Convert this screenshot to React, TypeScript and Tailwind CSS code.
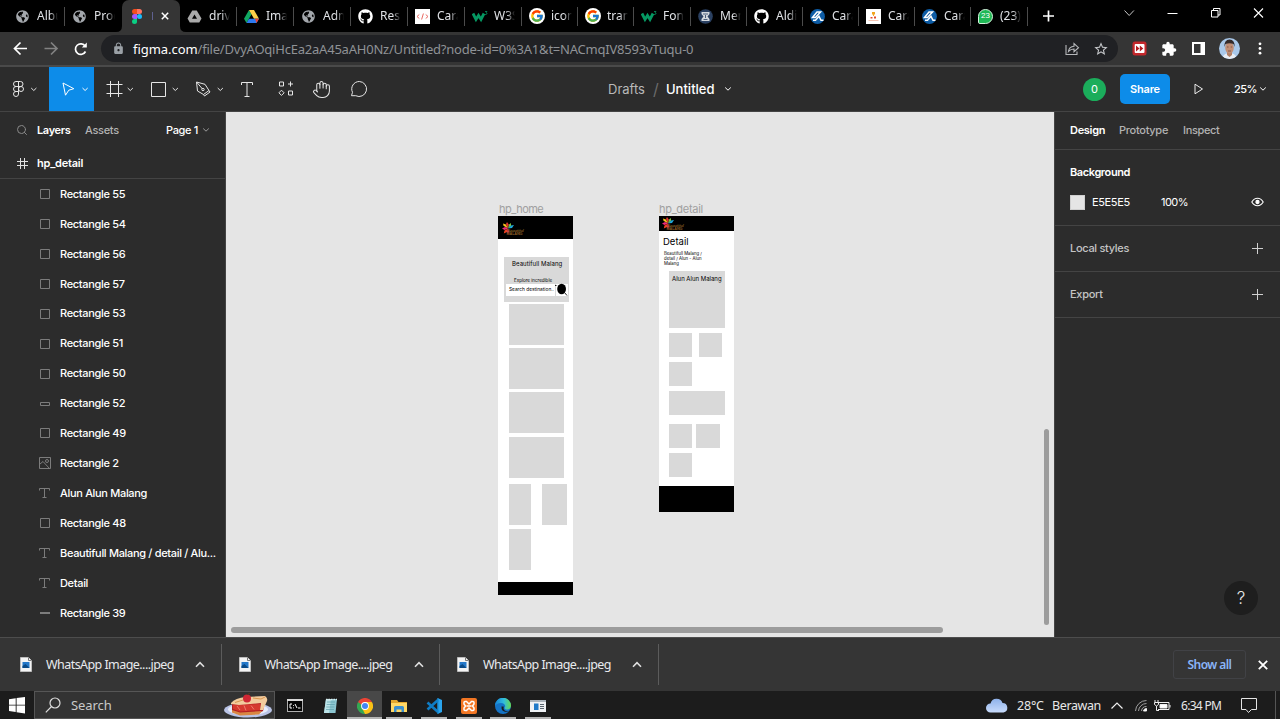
import React from "react";
import { Hand, Search as SearchIcon } from "lucide-react";
import { FaGithub, FaGlobeAmericas } from "react-icons/fa";
import { FcGoogle } from "react-icons/fc";
import { MdExtension, MdLock, MdStarBorder } from "react-icons/md";

type Kind = { children?: React.ReactNode; className?: string };

/* ---------- favicons ---------- */

const Globe = () => <FaGlobeAmericas className="h-[13px] w-[13px] text-[#a3a7ac]" />;

const FigmaLogo = () => (
  <svg className="h-[15px] w-[10px]" viewBox="0 0 20 30">
    <path d="M5 0h5v10H5A5 5 0 0 1 5 0z" fill="#f24e1e" />
    <path d="M10 0h5a5 5 0 0 1 0 10h-5z" fill="#ff7262" />
    <path d="M5 10h5v10H5a5 5 0 0 1 0-10z" fill="#a259ff" />
    <circle cx="15" cy="15" r="5" fill="#1abcfe" />
    <path d="M5 20h5v5a5 5 0 1 1-5-5z" fill="#0acf83" />
  </svg>
);

const DriveGray = () => (
  <svg className="h-[13px] w-[15px]" viewBox="0 0 30 26">
    <path d="M10.500 1h9L29 17l-4.500 8h-19L1 17z" fill="#a9a9a9" />
    <path d="M15 9l5 8.500H10z" fill="#000" />
  </svg>
);

const DriveColor = () => (
  <svg className="h-[13px] w-[15px]" viewBox="0 0 30 26">
    <path d="M10 0L0 17.500 5 26l10-17.500z" fill="#11a861" />
    <path d="M10 0h10l10 17.500H20z" fill="#ffcf48" />
    <path d="M10 17.500h20L25 26H5z" fill="#2d79f0" />
    <path d="M22 17.500h8L25 26z" fill="#ea4335" />
  </svg>
);

const Github = () => <FaGithub className="h-[15px] w-[15px] text-white" />;

const CodeIcon = () => (
  <svg className="h-[15px] w-[15px]" viewBox="0 0 15 15">
    <rect width="15" height="15" fill="#fff" />
    <path d="M4.300 5.500L2 7.500l2.300 2M10.700 5.500l2.300 2-2.300 2M8.400 4.500l-1.800 6" fill="none" stroke="#ea6a62" strokeWidth="1" />
  </svg>
);

const W3 = () => (
  <svg className="h-[15px] w-[16px]" viewBox="0 0 16 15">
    <path d="M1 4.500l3 6 2.500-4L9 10.500l3-6" fill="none" stroke="#059862" strokeWidth="2.800" />
    <path d="M13 2.500h2l-1 1.300c1.500 0 1.300 2-.9 1.700" fill="none" stroke="#059862" strokeWidth=".8" />
  </svg>
);

const Google = () => (
  <span className="flex h-[16px] w-[16px] items-center justify-center rounded-full bg-white">
    <FcGoogle className="h-[14px] w-[14px]" />
  </span>
);

const Mendeley = () => (
  <svg className="h-[15px] w-[15px]" viewBox="0 0 15 15">
    <circle cx="7.500" cy="7.500" r="7.300" fill="#2b4162" />
    <path d="M3.500 3h8v2L9.500 7.500l2 2.500v2h-8v-2l2-2.500-2-2.500z" fill="#d4d9df" />
    <path d="M5 5h5M5.500 10.500h4M7.500 6v3" stroke="#2b4162" strokeWidth=".8" />
  </svg>
);

const BlueIcon = () => (
  <svg className="h-[15px] w-[15px]" viewBox="0 0 15 15">
    <circle cx="7.500" cy="7.500" r="7.400" fill="#0d5ca5" />
    <path d="M2.500 8.500L7 3h3.500L5.500 8.500h-3zM3 11.300h2.500l3.500-4 2 4h2.500" fill="none" stroke="#fff" strokeWidth="1.500" />
  </svg>
);

const CardIcon = () => (
  <svg className="h-[15px] w-[15px]" viewBox="0 0 15 15">
    <rect width="15" height="15" fill="#fff" />
    <path d="M6 3h3v2.500H8V7h-.9V5.500H6z" fill="#f2a51d" />
    <path d="M4.500 8h2v1.500h-2zM8 7.500h2v2H8z" fill="#e04b2a" />
    <path d="M2.500 11.500h10" stroke="#f3b39d" strokeWidth=".8" />
  </svg>
);

const WhatsApp = () => (
  <span className="flex h-[15px] w-[15px] shrink-0 items-center justify-center rounded-[8px_8px_8px_2px] border border-[#d7f5df] bg-[#1fb855] font-['Liberation_Sans',sans-serif] text-[8px] leading-none text-white">
    23
  </span>
);

const Fade = ({ children }: Kind) => (
  <span className="w-[21px] overflow-hidden whitespace-nowrap text-[12px] leading-4 text-[#dfe1e5] [mask-image:linear-gradient(to_right,black_60%,transparent)]">
    {children}
  </span>
);

const tabs: { w: string; icon: React.ReactNode; t: string; sep?: boolean }[] = [
  { w: "w-[57px]", icon: <Globe />, t: "Album", sep: true },
  { w: "w-[57px]", icon: <Globe />, t: "Produk" },
  { w: "w-[58px]", icon: <FigmaLogo />, t: "active" },
  { w: "w-[57px]", icon: <DriveGray />, t: "drive", sep: true },
  { w: "w-[57px]", icon: <DriveColor />, t: "Image", sep: true },
  { w: "w-[57px]", icon: <Globe />, t: "Admin", sep: true },
  { w: "w-[57px]", icon: <Github />, t: "Resp", sep: true },
  { w: "w-[57px]", icon: <CodeIcon />, t: "Cara", sep: true },
  { w: "w-[57px]", icon: <W3 />, t: "W3S", sep: true },
  { w: "w-[56px]", icon: <Google />, t: "icon", sep: true },
  { w: "w-[56px]", icon: <Google />, t: "trans", sep: true },
  { w: "w-[57px]", icon: <W3 />, t: "Font", sep: true },
  { w: "w-[56px]", icon: <Mendeley />, t: "Men", sep: true },
  { w: "w-[56px]", icon: <Github />, t: "Aldi", sep: true },
  { w: "w-[56px]", icon: <BlueIcon />, t: "Cara", sep: true },
  { w: "w-[56px]", icon: <CardIcon />, t: "Cara", sep: true },
  { w: "w-[56px]", icon: <BlueIcon />, t: "Cara", sep: true },
  { w: "w-[57px]", icon: <WhatsApp />, t: "(23)", sep: true },
];

const TabStrip = () => (
  <div className="flex h-8 shrink-0 bg-black pl-[8px]">
    {tabs.map((t, i) =>
      t.t === "active" ? (
        <div key={i} className="relative flex h-8 w-[58px] shrink-0 items-center rounded-t-[7px] bg-[#353535] pl-[10px]">
          <svg className="absolute -left-[6px] bottom-0 h-[6px] w-[70px]" viewBox="0 0 70 6">
            <path d="M0 6q6 0 6-6v6zM70 6q-6 0-6-6v6z" fill="#353535" />
          </svg>
          <FigmaLogo />
          <span className="ml-[10px] h-[8px] w-px bg-[#5f6190]" />
          <svg className="ml-[8px] h-[8px] w-[8px]" viewBox="0 0 8 8">
            <path d="M.8.800l6.400 6.400M7.200.800L.8 7.200" stroke="#fff" strokeWidth="1.500" />
          </svg>
        </div>
      ) : (
        <div key={i} className={`flex h-8 shrink-0 items-center ${t.w}`}>
          <span className="ml-[6.500px] flex w-[16px] justify-center">{t.icon}</span>
          <span className="ml-[6.500px] flex">
            <Fade>{t.t}</Fade>
          </span>
          {t.sep && <span className="ml-auto h-[19px] w-px bg-[#4b4b4b]" />}
        </div>
      ),
    )}
    <svg className="h-8 w-[252px] shrink-0" viewBox="1028 0 252 32" fill="none" stroke="#fff">
      <path d="M1043 16h11M1048.500 10.500v11" strokeWidth="1.700" />
      <path d="M1124.500 10.500l4.700 5 4.700-5" stroke="#c8c8c8" />
      <path d="M1167.500 13.500h10" />
      <path d="M1211.500 10.500h6.500v6.500h-6.500zM1213.500 10.500v-2h6.500v6.500h-2" />
      <path d="M1254 8.500l9 9M1263 8.500l-9 9" strokeWidth="1.100" />
    </svg>
  </div>
);

const AddressBar = () => (
  <div className="flex h-[33px] shrink-0 items-center bg-[#353535]">
    <svg className="h-[33px] w-[101px] shrink-0" viewBox="0 32 101 33" fill="none" stroke="#fff" strokeWidth="1.700">
      <path d="M27 48.500H15M20.500 42.500l-6 6 6 6" />
      <path d="M44.500 48.500h12M51 42.500l6 6-6 6" stroke="#828282" />
      <path d="M85.500 51.500a5.300 5.300 0 1 1-.3-5.300" />
      <path d="M86.800 42.500v5h-5z" fill="#fff" stroke="none" />
    </svg>
    <div className="flex h-[27px] w-[1017px] items-center rounded-full bg-[#202124] pl-[11px] pr-[9px]">
      <MdLock className="h-[13px] w-[13px] text-[#9aa0a6]" />
      <span className="ml-[8px] whitespace-nowrap text-[13px] leading-5 tracking-[-0.215px] text-[#8f9296]">
        <span className="tracking-[-0.050px] text-white">figma.com</span>/file/DvyAOqiHcEa2aA45aAH0Nz/Untitled?node-id=0%3A1&amp;t=NACmqIV8593vTuqu-0
      </span>
      <svg className="ml-auto h-[16px] w-[16px]" viewBox="0 0 16 16" fill="none" stroke="#b6b8bb" strokeWidth="1.100">
        <path d="M2 4v9.500h11V10.500M4.500 10.500c.5-3.500 2.500-5 5.500-5.200V2.500l4.500 4.200-4.500 4V8c-2.500 0-4 .7-5.500 2.500z" />
      </svg>
      <MdStarBorder className="ml-[13px] h-[16px] w-[16px] text-[#c5c7ca]" />
    </div>
    <svg className="ml-[14px] h-[15px] w-[15px]" viewBox="0 0 15 15">
      <rect x=".5" y=".5" width="14" height="14" rx="2.500" fill="#c3272b" />
      <rect x="2.700" y="3" width="9.800" height="9" rx="1" fill="#fff" />
      <path d="M4 4.500l3.500 3L4 10.500zM7.800 4.500l3.500 3-3.500 3z" fill="#b31b20" />
    </svg>
    <MdExtension className="ml-[14px] h-[16px] w-[16px] text-white" />
    <svg className="ml-[15px] h-[13px] w-[13px]" viewBox="0 0 13 13">
      <path d="M0 0h13v13H0zM2 2v9h6.500V2z" fill="#fff" fillRule="evenodd" />
    </svg>
    <svg className="ml-[14px] h-[21px] w-[21px]" viewBox="0 0 21 21">
      <clipPath id="avatar"><circle cx="10.500" cy="10.500" r="10.500" /></clipPath>
      <g clipPath="url(#avatar)">
        <rect width="21" height="21" fill="#a9c8ea" />
        <path d="M3 21q1-5 5-5.500h5q4 .5 5 5.500z" fill="#e8edf5" />
        <path d="M8 13h5v4l-2.500 2L8 17z" fill="#b07f67" />
        <ellipse cx="10.500" cy="9.800" rx="4.300" ry="5.800" fill="#c08e76" />
        <path d="M5.500 9q-.5-7.500 5-7.500t5 7.500l-1-3q-4-1.500-8 0z" fill="#332a2a" />
        <path d="M8 9h1.500M11.700 9h1.500M9 13h3" stroke="#6b4338" strokeWidth=".7" />
      </g>
    </svg>
    <svg className="ml-[18px] h-[13px] w-[4px]" viewBox="0 0 4 13" fill="#fff">
      <circle cx="2" cy="1.800" r="1.400" /><circle cx="2" cy="6.500" r="1.400" /><circle cx="2" cy="11.200" r="1.400" />
    </svg>
  </div>
);

/* ---------- editor toolbar ---------- */

const Toolbar = () => (
  <div className="flex h-[47px] shrink-0 items-center border-b border-t-2 border-b-[#444] border-t-[#4a4a4a] bg-[#2c2c2c] font-['Inter',sans-serif]">
    <svg className="h-full w-[49px] shrink-0" viewBox="0 67 49 44" fill="none" stroke="#e6e6e6">
      <path d="M18.500 81.500h-2.500a2.500 2.500 0 0 0 0 5h2.500zM18.500 81.500h2a2.500 2.500 0 0 1 0 5h-2zM18.500 86.500h-2.500a2.500 2.500 0 0 0 0 5h2.500zM18.500 91.500h-2.500a2.500 2.500 0 1 0 2.500 2.500z" />
      <circle cx="21" cy="89" r="2.500" />
      <path d="M31.200 88l2.600 2.500 2.600-2.500" />
    </svg>
    <svg className="h-full w-[45px] shrink-0 bg-[#0d8ce9]" viewBox="49 67 45 44" fill="none" stroke="#fff">
      <path d="M63 83l10.800 5.700-5 1.500-3.300 5z" strokeLinejoin="round" />
      <path d="M82.500 88l2.600 2.500 2.600-2.500" />
    </svg>
    <svg className="h-full w-[45px] shrink-0" viewBox="94 67 45 44" fill="none" stroke="#e6e6e6">
      <path d="M110.500 81v16M118.500 81v16M106.500 84.500h16M106.500 93.500h16" />
      <path d="M127.700 88l2.600 2.500 2.600-2.500" />
    </svg>
    <svg className="h-full w-[45px] shrink-0" viewBox="139 67 45 44" fill="none" stroke="#e6e6e6">
      <path d="M151.500 82.500h14v14h-14z" />
      <path d="M172.700 88l2.600 2.500 2.600-2.500" />
    </svg>
    <svg className="h-full w-[45px] shrink-0" viewBox="184 67 45 44" fill="none" stroke="#e6e6e6" strokeLinejoin="round">
      <path d="M196.500 82l8.500 2.300 4 6.200-5.500 4-6-3.500zM196.500 82l6 7M203.500 94.500l1 1.500 5.500-4-1-1.500" />
      <circle cx="203" cy="89.500" r="1.200" />
      <path d="M217.700 88l2.600 2.500 2.600-2.500" />
    </svg>
    <svg className="h-full w-[37px] shrink-0" viewBox="229 67 37 44" fill="none" stroke="#e6e6e6">
      <path d="M241.500 85v-2.500h11V85M247 82.500V96M244.500 96.500h5" />
    </svg>
    <svg className="h-full w-[39px] shrink-0" viewBox="266 67 39 44" fill="none" stroke="#e6e6e6">
      <path d="M279.500 82h4v4h-4zM288.500 91h4v4h-4zM290.500 81.500v5M288 84h5M281.500 90.200l2.600 2.600-2.600 2.600-2.600-2.600z" />
    </svg>
    <Hand className="ml-[7px] h-[19px] w-[19px] shrink-0 text-[#e6e6e6]" strokeWidth={1.300} />
    <svg className="h-full w-[45px] shrink-0" viewBox="331 67 45 44" fill="none" stroke="#e6e6e6">
      <path d="M359.300 81.500a7.500 7.500 0 1 1-3.600 14.200H351.500l1-3.400a7.500 7.500 0 0 1 6.800-10.800z" strokeLinejoin="round" />
    </svg>
    <div className="ml-[232px] flex items-center text-[13px] leading-5">
      <span className="w-[38px] whitespace-nowrap text-[#b9b9b9]">Drafts</span>
      <span className="w-[20px] pl-[7px] text-[16px] text-[#6b6b6b]">/</span>
      <span className="w-[58px] font-medium text-white">Untitled</span>
      <svg className="h-[6px] w-[8px]" viewBox="0 0 8 6" fill="none" stroke="#fff"><path d="M1.200 1.500L4 4.200l2.800-2.700" /></svg>
    </div>
    <div className="ml-auto flex w-[197px] items-center">
      <span className="flex h-[23px] w-[23px] items-center justify-center rounded-full bg-[#1bad5b] text-[11px] text-white">0</span>
      <span className="ml-[14px] flex h-[30px] w-[50px] items-center justify-center rounded-[5px] bg-[#0d8ce9] text-[11px] font-semibold tracking-[-0.200px] text-white">Share</span>
      <svg className="ml-[24px] h-[12px] w-[10px]" viewBox="0 0 10 12" fill="none" stroke="#eee"><path d="M1 1.200L8.500 6 1 10.800z" /></svg>
      <span className="ml-[30px] w-[25px] text-[11px] font-medium tracking-[-0.500px] text-white">25%</span>
      <svg className="h-[6px] w-[8px]" viewBox="0 0 8 6" fill="none" stroke="#fff"><path d="M1.200 1.500L4 4.200l2.800-2.700" /></svg>
    </div>
  </div>
);

/* ---------- layers ---------- */

const RowIcon = ({ k }: { k: string }) => (
  <svg className="h-[12px] w-[12px] shrink-0" viewBox="0 0 12 12" fill="none" stroke="#7c7c7c">
    {k === "r" && <path d="M1.500 1.500h9v9h-9z" />}
    {k === "w" && <path d="M1.500 4.500h9v3h-9z" />}
    {k === "l" && <path d="M1 5.500h10M1 6.500h10" />}
    {k === "t" && <path d="M.5 3.500v-2h10v2M5.500 1.500v9M3.500 10.500h4" />}
    {k === "i" && (
      <>
        <path d="M.5.500h11v11H.5zM1 7l3-2.500 6.500 7" />
        <circle cx="8" cy="4" r="1.500" />
      </>
    )}
  </svg>
);

const layers: [string, string][] = [
  ["r", "Rectangle 55"], ["r", "Rectangle 54"], ["r", "Rectangle 56"], ["r", "Rectangle 57"],
  ["r", "Rectangle 53"], ["r", "Rectangle 51"], ["r", "Rectangle 50"], ["w", "Rectangle 52"],
  ["r", "Rectangle 49"], ["i", "Rectangle 2"], ["t", "Alun Alun Malang"], ["r", "Rectangle 48"],
  ["t", "Beautifull Malang / detail / Alu..."], ["t", "Detail"], ["l", "Rectangle 39"],
];

const LayersPanel = () => (
  <aside className="flex w-[226px] shrink-0 flex-col border-r border-[#444] bg-[#2c2c2c] text-[11px] text-white">
    <div className="flex h-[36px] items-center pl-[16px]">
      <SearchIcon className="h-[12px] w-[12px] text-[#8a8a8a]" strokeWidth={2} />
      <span className="ml-[9px] w-[48px] font-semibold tracking-[-0.350px]">Layers</span>
      <span className="w-[81px] font-medium tracking-[-0.300px] text-[#b3b3b3]">Assets</span>
      <span className="w-[36px] whitespace-nowrap font-medium tracking-[-0.350px]">Page 1</span>
      <svg className="h-[6px] w-[8px]" viewBox="0 0 8 6" fill="none" stroke="#9a9a9a"><path d="M1.200 1.500L4 4.200l2.800-2.700" /></svg>
    </div>
    <div className="flex h-[31px] items-center border-b border-[#444] pl-[17px]">
      <svg className="h-[11px] w-[11px]" viewBox="0 0 11 11" fill="none" stroke="#e0e0e0"><path d="M3.500 0v11M7.500 0v11M0 3.500h11M0 7.500h11" /></svg>
      <span className="ml-[9px] font-semibold tracking-[-0.220px]">hp_detail</span>
    </div>
    {layers.map(([k, t]) => (
      <div key={t} className="flex h-[29.950px] shrink-0 items-center gap-[9px] pl-[39px]">
        <RowIcon k={k} />
        <span className="whitespace-nowrap font-medium tracking-[-0.320px]">{t}</span>
      </div>
    ))}
  </aside>
);

/* ---------- canvas ---------- */

const Box = ({ className = "" }: Kind) => <div className={`absolute bg-[#d9d9d9] ${className}`} />;

const FlowerLogo = () => (
  <svg className="h-[13px] w-[24px]" viewBox="0 0 24 13">
    <path d="M6 6.500L1.500 3.800 1 1.500l3 1z" fill="#f6c21c" />
    <path d="M6 6.500L4 2l1-2 1.700 2.500z" fill="#e6342e" />
    <path d="M6 6.500L7 2.500 9 1v2.500z" fill="#7bc143" />
    <path d="M6 6.500L9 3.500l3-.5-2 3z" fill="#1fa9d8" />
    <path d="M6 6.500L2.500 8 0 6.500 3 5z" fill="#ee2a7b" />
    <path d="M6 6.500L5 10l-3.200 1.500.7-3z" fill="#ef4123" />
    <path d="M6 6.500l1.200 3L6 12l-1.200-2z" fill="#d91f5c" />
    <text x="5" y="9.500" fontSize="5" fontStyle="italic" textLength="17" fill="#a57b2d" fontFamily="Liberation Serif">Beautiful</text>
    <text x="4.500" y="12.800" fontSize="3.800" fontWeight="bold" textLength="16" fill="#8a5c24" fontFamily="Liberation Sans">MALANG</text>
  </svg>
);

const Canvas = () => (
  <main className="relative min-w-0 flex-1 overflow-hidden bg-[#e5e5e5] text-black">
    <span className="absolute left-[273px] top-[90px] text-[11px] leading-[14px] tracking-[-0.500px] text-[#a0a0a0]">hp_home</span>
    <div className="absolute left-[272px] top-[104px] h-[379px] w-[75px] bg-white">
      <div className="h-[23px] bg-black pl-[4px] pt-[6px]"><FlowerLogo /></div>
      <Box className="left-[6px] top-[41px] h-[45px] w-[65px]" />
      <span className="absolute left-[14px] top-[44px] whitespace-nowrap text-[6px] leading-[8px] tracking-[0.080px]">Beautifull Malang</span>
      <span className="absolute left-[16px] top-[62px] whitespace-nowrap text-[4.500px] leading-[6px]">Explore incredible</span>
      <div className="absolute left-[8px] top-[68px] h-[12px] w-[49px] whitespace-nowrap bg-white pl-[3px] text-[4.800px] leading-[11px]">Search destination..</div>
      <div className="absolute left-[58px] top-[68px] h-[12px] w-[12px] bg-white" />
      <svg className="absolute left-[57px] top-[66px] h-[16px] w-[14px]" viewBox="0 0 14 16">
        <path d="M0 3.500h1.500M9.500 10.500l2.500 3" fill="none" stroke="#222" strokeWidth="1" />
        <ellipse cx="6.600" cy="7" rx="4.400" ry="5.200" />
      </svg>
      <Box className="left-[11px] top-[88px] h-[41px] w-[55px]" />
      <Box className="left-[11px] top-[132px] h-[41px] w-[55px]" />
      <Box className="left-[11px] top-[176px] h-[41px] w-[55px]" />
      <Box className="left-[11px] top-[221px] h-[41px] w-[55px]" />
      <Box className="left-[11px] top-[268px] h-[41px] w-[22px]" />
      <Box className="left-[44px] top-[268px] h-[41px] w-[25px]" />
      <Box className="left-[11px] top-[313px] h-[41px] w-[22px]" />
      <div className="absolute bottom-0 h-[13px] w-[75px] bg-black" />
    </div>
    <span className="absolute left-[433px] top-[90px] text-[11px] leading-[14px] tracking-[-0.300px] text-[#a0a0a0]">hp_detail</span>
    <div className="absolute left-[433px] top-[104px] h-[296px] w-[75px] bg-white">
      <div className="h-[15px] bg-black pl-[3px] pt-[1px]"><FlowerLogo /></div>
      <span className="absolute left-[4px] top-[20px] text-[9.500px] leading-[12px]">Detail</span>
      <p className="absolute left-[5px] top-[35px] whitespace-nowrap text-[4.300px] leading-[5.200px]">
        Beautifull Malang /<br />detail / Alun - Alun<br />Malang
      </p>
      <Box className="left-[10px] top-[55px] h-[57px] w-[56px]" />
      <span className="absolute left-[13px] top-[59px] whitespace-nowrap text-[6px] leading-[8px]">Alun Alun Malang</span>
      <Box className="left-[10px] top-[117px] h-[24px] w-[23px]" />
      <Box className="left-[40px] top-[117px] h-[24px] w-[23px]" />
      <Box className="left-[10px] top-[146px] h-[24px] w-[23px]" />
      <Box className="left-[10px] top-[175px] h-[24px] w-[56px]" />
      <Box className="left-[10px] top-[208px] h-[24px] w-[23px]" />
      <Box className="left-[37px] top-[208px] h-[24px] w-[24px]" />
      <Box className="left-[10px] top-[237px] h-[24px] w-[23px]" />
      <div className="absolute bottom-0 h-[26px] w-[75px] bg-black" />
    </div>
    <div className="absolute left-[5px] top-[515px] h-[6px] w-[712px] rounded-full bg-[#9c9c9c]" />
    <div className="absolute left-[818px] top-[317px] h-[196px] w-[5px] rounded-full bg-[#9c9c9c]" />
  </main>
);

/* ---------- properties ---------- */

const Plus = () => (
  <svg className="mb-px h-[11px] w-[11px]" viewBox="0 0 11 11" stroke="#d0d0d0"><path d="M5.500 0v11M0 5.500h11" /></svg>
);

const PropertiesPanel = () => (
  <aside className="relative flex w-[226px] shrink-0 flex-col border-l border-[#444] bg-[#2c2c2c] text-[11px] text-white">
    <div className="flex h-[38px] items-center border-b border-[#444] pl-[15px]">
      <span className="w-[49px] font-semibold tracking-[-0.300px]">Design</span>
      <span className="w-[64px] font-medium tracking-[-0.280px] text-[#b3b3b3]">Prototype</span>
      <span className="font-medium tracking-[-0.350px] text-[#b3b3b3]">Inspect</span>
    </div>
    <div className="h-[76px] border-b border-[#444] pl-[15px] pt-[14px]">
      <div className="font-semibold leading-4 tracking-[-0.400px]">Background</div>
      <div className="mt-[14px] flex h-4 items-center">
        <span className="h-[15px] w-[15px] border border-[#d0d0d0] bg-[#e5e5e5]" />
        <span className="ml-[7px] w-[69px] tracking-[-0.350px]">E5E5E5</span>
        <span className="w-[90px] tracking-[-0.550px]">100%</span>
        <svg className="h-[10px] w-[13px]" viewBox="0 0 13 10" fill="none" stroke="#fff" strokeWidth="1.100">
          <path d="M.8 5Q3 1.300 6.500 1.300T12.200 5Q10 8.700 6.500 8.700T.8 5z" /><circle cx="6.500" cy="5" r="1.600" fill="#fff" />
        </svg>
      </div>
    </div>
    <div className="flex h-[46px] items-center justify-between border-b border-[#444] pl-[15px] pr-[17px] font-medium tracking-[-0.300px] text-[#c4c4c4]">Local styles<Plus /></div>
    <div className="flex h-[46px] items-center justify-between border-b border-[#444] pl-[15px] pr-[17px] font-medium tracking-[-0.300px] text-[#c4c4c4]">Export<Plus /></div>
    <div className="absolute bottom-[22px] right-[22px] flex h-[34px] w-[34px] items-center justify-center rounded-full bg-[#1e1e1e] pt-px text-[17px] font-light text-[#e8e8e8]">?</div>
  </aside>
);

/* ---------- downloads and taskbar ---------- */

const Download = () => (
  <div className="flex w-[218.500px] shrink-0 items-center">
    <svg className="ml-[17px] h-[15px] w-[12px]" viewBox="0 0 12 15">
      <path d="M.5.500h8l3 3v11H.5z" fill="#f4f4f4" stroke="#bdbdbd" />
      <path d="M8.500.500v3h3" fill="none" stroke="#777" />
      <path d="M2.500 5h7v6h-7z" fill="#2478c9" />
      <path d="M2.500 9l3-2 4 4h-7z" fill="#0b4a86" />
    </svg>
    <span className="ml-[14px] w-[149px] whitespace-nowrap pt-px text-[12.500px] tracking-[-0.560px] text-[#e8eaed]">WhatsApp Image....jpeg</span>
    <svg className="h-[7px] w-[10px]" viewBox="0 0 10 7" fill="none" stroke="#e0e0e0" strokeWidth="1.600"><path d="M1 5.700L5 1.700l4 4" /></svg>
    <span className="ml-auto h-[41px] w-px bg-[#5c5c5c]" />
  </div>
);

const Downloads = () => (
  <div className="flex h-[54px] shrink-0 items-center border-t border-[#4d4d4d] bg-[#353535] pl-[3px]">
    <Download /><Download /><Download />
    <span className="ml-auto mr-[12px] flex h-[29px] w-[73px] items-center justify-center rounded-[3px] border border-[#414246] text-[12px] font-semibold tracking-[-0.550px] text-[#8ab4f8]">Show all</span>
    <svg className="mr-[12px] h-[10px] w-[10px]" viewBox="0 0 10 10" stroke="#fff" strokeWidth="1.800"><path d="M.8.800l8.400 8.400M9.200.800L.8 9.200" /></svg>
  </div>
);

const TaskApp = ({ children, className = "", line = "w-[26px]" }: Kind & { line?: string }) => (
  <div className={`flex w-[34.700px] shrink-0 flex-col items-center justify-end ${className}`}>
    <span className="flex flex-1 items-center pt-[3px]">{children}</span>
    <span className={`h-[2px] bg-[#b5b5b5] ${line}`} />
  </div>
);

const Chrome = () => (
  <svg className="h-[16px] w-[16px]" viewBox="0 0 32 32">
    <path d="M16 16L2.100 8A16 16 0 0 1 29.900 8z" fill="#ea4335" />
    <path d="M16 16L29.900 8A16 16 0 0 1 16 32z" fill="#fbc116" />
    <path d="M16 16v16A16 16 0 0 1 2.100 8z" fill="#34a853" />
    <path d="M16 8h13.900L22 20z" fill="#fbc116" />
    <path d="M22.900 20L16 32l-5-10z" fill="#fbc116" />
    <path d="M2.100 8L9 20l7-12z" fill="#34a853" />
    <path d="M2.100 8h27.800H16l-6 6z" fill="#ea4335" />
    <circle cx="16" cy="16" r="7.800" fill="#fff" /><circle cx="16" cy="16" r="6" fill="#4285f4" />
  </svg>
);

const Taskbar = () => (
  <div className="flex h-[28px] shrink-0 bg-[#1c1c1c] text-[#e8e8e8]">
    <svg className="h-[28px] w-[34px] shrink-0" viewBox="0 691 34 28" fill="#fff">
      <path d="M9 699.300l6.700-1v6.400H9zM16.600 698.100l8.400-1.200v7.800h-8.400zM9 705.600h6.700v6.400l-6.700-1zM16.600 705.600H25v7.800l-8.400-1.200z" />
    </svg>
    <div className="flex w-[241px] shrink-0 items-center border border-[#565656] bg-[#333]">
      <svg className="ml-[10px] h-[16px] w-[16px]" viewBox="0 0 16 16" fill="none" stroke="#dedede" strokeWidth="1.200"><circle cx="10" cy="6" r="5" /><path d="M6.500 9.500L.8 15.300" /></svg>
      <span className="ml-[10px] pt-[2px] text-[13px] tracking-[-0.080px] text-[#c9c9c9]">Search</span>
      <svg className="ml-auto mr-px h-[25px] w-[50px]" viewBox="0 0 50 25">
        <ellipse cx="25" cy="17" rx="24" ry="7.500" fill="#b9c3e6" />
        <ellipse cx="25" cy="16.500" rx="20" ry="5.500" fill="#e6ebfa" />
        <path d="M9 11l33-2-2 9-4 2-20 1-7-3z" fill="#b11f24" />
        <path d="M10 12l27-1v6l-20 1.500-7-2.500z" fill="#d5392f" />
        <path d="M8 10q4-5 15-6l19-1q3 2 2 5l-4 9-3 0 1-7-22 2-8-1z" fill="#f2cb9d" />
        <path d="M9 17l8 2.500 22-1.500-3 3.500-19 1-8-3z" fill="#d98743" />
        <path d="M30 5l8 1 4-2M12 9.500l8-2.500" stroke="#d8954f" fill="none" />
        <path d="M14 13l3 4M21 12.500l2 5M28 12.500l3 4" stroke="#f1786c" />
        <circle cx="24" cy="5.500" r="4" fill="#cf2734" /><path d="M24 2q1-2 3-1.500" stroke="#5b3a20" fill="none" />
      </svg>
    </div>
    <div className="ml-[3px] flex">
      <TaskApp line="w-0">
        <svg className="h-[13px] w-[16px]" viewBox="0 0 16 13">
          <rect x=".5" y=".5" width="15" height="12" fill="#050505" stroke="#b0b0b0" /><path d="M0 1h16" stroke="#d8d8d8" strokeWidth="2" />
          <path d="M5 5H3v4h2M6.500 6v.8M6.500 8.500v.8M8 5l2 4M11 9h2.500" stroke="#fff" fill="none" />
        </svg>
      </TaskApp>
      <TaskApp line="w-0">
        <svg className="h-[16px] w-[15px]" viewBox="0 0 15 16">
          <path d="M3 1h11l-1.500 14H1z" fill="#8cc6d1" /><path d="M3 1h5l-2 14H1z" fill="#bce3e8" />
          <path d="M4 4h8M3.700 6.500h8M3.300 9h8M3 11.500h8" stroke="#5c9dab" strokeWidth=".7" /><path d="M3 1.500h11" stroke="#dceef0" strokeDasharray="1.500 1" strokeWidth="1.500" />
        </svg>
      </TaskApp>
      <TaskApp className="bg-[#484848]" line="w-full"><Chrome /></TaskApp>
      <TaskApp>
        <svg className="h-[14px] w-[16px]" viewBox="0 0 16 14">
          <path d="M0 1h6l1.500 2H16v10H0z" fill="#e4a72e" /><path d="M0 4h16v9H0z" fill="#ffd867" />
          <path d="M3 13V8.500q0-1.500 1.500-1.500h7q1.500 0 1.500 1.500V13h-2.500v-2.500h-5V13z" fill="#3b8fce" />
        </svg>
      </TaskApp>
      <TaskApp>
        <svg className="h-[16px] w-[16px]" viewBox="0 0 16 16">
          <path d="M11.500 0L16 2v12l-4.500 2z" fill="#2aa4ed" />
          <path d="M1.500 4.500L12 14M1.500 11.500L12 2" stroke="#0f7cc4" strokeWidth="2.600" />
          <path d="M11.500 0v16l1-.5V.500z" fill="#1389d3" />
        </svg>
      </TaskApp>
      <TaskApp>
        <svg className="h-[16px] w-[16px]" viewBox="0 0 16 16">
          <rect width="16" height="16" rx="2" fill="#f37623" />
          <path d="M3 4.500q0-1 1-1h1.500L8 6l2.500-2.500H12q1 0 1 1v1.500l-1.500 2 1.500 2v1.500q0 1-1 1h-1.500L8 10l-2.500 2.500H4q-1 0-1-1V10l1.500-2L3 6zM5.500 8h5" fill="none" stroke="#fff" strokeWidth="1.500" />
        </svg>
      </TaskApp>
      <TaskApp>
        <svg className="h-[16px] w-[16px]" viewBox="0 0 16 16">
          <defs><linearGradient id="edge" x1="0" x2="1"><stop stopColor="#1683d8" /><stop offset=".55" stopColor="#31bddd" /><stop offset="1" stopColor="#67d94e" /></linearGradient></defs>
          <circle cx="8" cy="8" r="8" fill="#1473c6" />
          <path d="M0 8a8 8 0 0 1 16-.5c0 3-2 4-4 4-1.500 0-2.500-.7-2.500-1.500 0-.6.700-.8.700-2C10.200 6.500 8.500 5 6 5 3 5 .5 6.500 0 8z" fill="url(#edge)" />
          <path d="M6.500 8.500q-.5 5 5 5.500 2 0 3.200-1-2.700 1-5-.5-1.800-1.200-1-4z" fill="#1c1c1c" />
        </svg>
      </TaskApp>
      <TaskApp>
        <svg className="h-[12px] w-[16px]" viewBox="0 0 16 12">
          <rect width="16" height="12" fill="#eef1f4" /><path d="M0 1h16" stroke="#aab3bb" strokeWidth="2" />
          <path d="M4 3.500h4.500V10H4z" fill="#1e79c8" /><path d="M10 4.500h4M10 6.500h4M10 8.500h4" stroke="#59656f" />
        </svg>
      </TaskApp>
    </div>
    <div className="ml-auto flex w-[295px] shrink-0 items-center whitespace-nowrap text-[12.500px]">
      <svg className="h-[17px] w-[24px]" viewBox="0 0 24 17">
        <defs><linearGradient id="cloud" x2="0" y2="1"><stop stopColor="#8fb2ea" /><stop offset="1" stopColor="#c8dbfb" /></linearGradient></defs>
        <path d="M5.500 15.500a4.500 4.500 0 0 1 0-9A6.300 6.300 0 0 1 17.500 6a4.800 4.800 0 0 1 1 9.500z" fill="url(#cloud)" />
      </svg>
      <span className="ml-[8px] w-[35px] pt-[2px] tracking-[-0.200px]">28°C</span>
      <span className="w-[58px] pt-[2px] tracking-[-0.400px]">Berawan</span>
      <svg className="h-[28px] w-[70px] shrink-0" viewBox="1110 691 70 28" fill="none" stroke="#f0f0f0">
        <path d="M1111.500 708.500l5.500-5.500 5.500 5.500" strokeWidth="1.200" />
        <path d="M1135.500 711a11 11 0 0 1 11-10.500M1138.500 711a8 8 0 0 1 8-7.500M1141.500 711a5 5 0 0 1 5-4.500" stroke="#9f9f9f" />
        <path d="M1143.500 711a3 3 0 0 1 3-2.500v2.500z" fill="#fff" />
        <path d="M1158 702.500h11v7h-11M1170 705v2.500M1155 700v2M1158 700v2M1154.500 702.500h4v2l-2 1.500-2-1.500zM1156.500 706v4.500h2.500" />
        <path d="M1160 704.500h7v3.500h-7z" fill="#fff" />
      </svg>
      <span className="w-[60px] pl-px pt-px text-[12px] tracking-[-0.700px]">6:34 PM</span>
      <svg className="h-[28px] w-[40px] shrink-0" viewBox="1240 691 40 28" fill="none" stroke="#e5e5e5">
        <path d="M1241.500 698.500h15v11h-5l-3 3-2.500-3h-4.500z" />
        <path d="M1275.500 691v28" stroke="#555" />
      </svg>
    </div>
  </div>
);

export default function App() {
  return (
    <div className="flex h-[719px] w-[1280px] flex-col overflow-hidden bg-[#353535] font-['Noto_Sans',sans-serif]">
      <TabStrip />
      <AddressBar />
      <Toolbar />
      <div className="flex h-[525px] shrink-0 bg-[#2c2c2c] font-['Inter',sans-serif]">
        <LayersPanel />
        <Canvas />
        <PropertiesPanel />
      </div>
      <Downloads />
      <Taskbar />
    </div>
  );
}
